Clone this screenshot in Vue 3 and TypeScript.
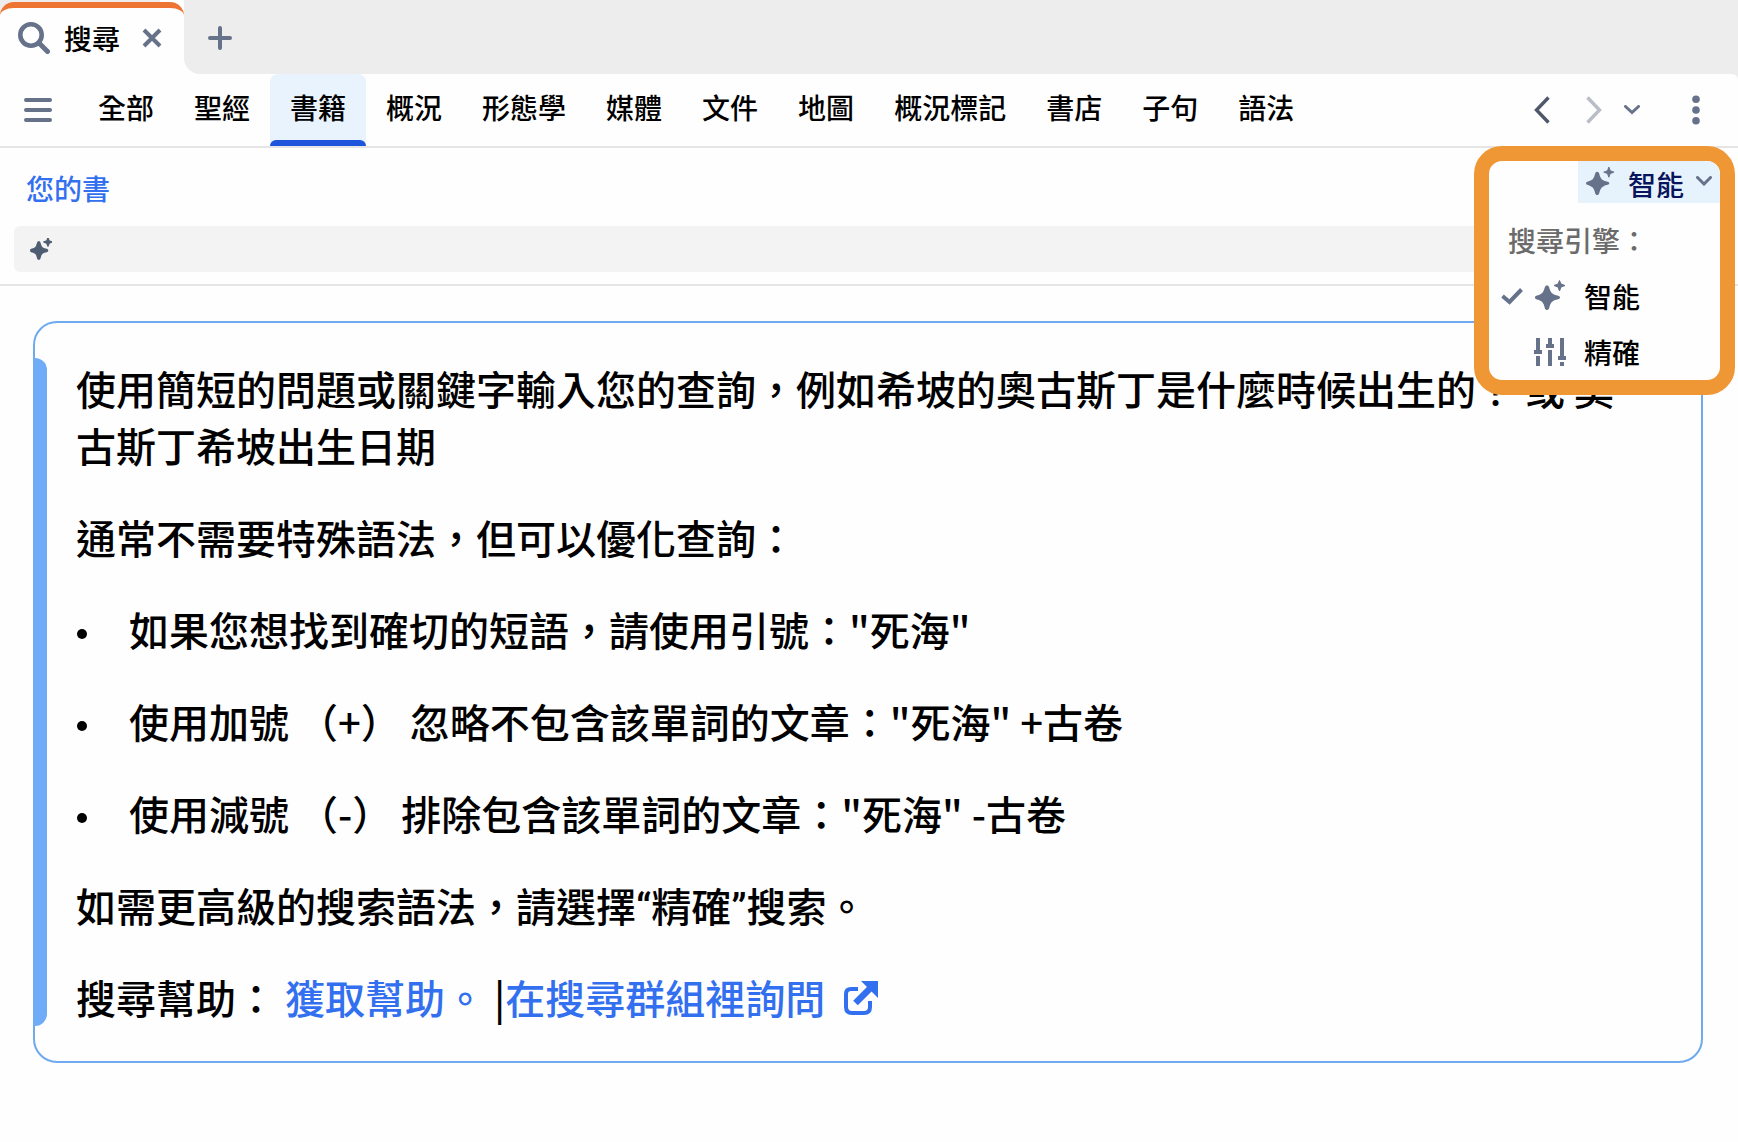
<script setup lang="ts">
import { ref } from 'vue'

const tabs: string[] = ['全部', '聖經', '書籍', '概況', '形態學', '媒體', '文件', '地圖', '概況標記', '書店', '子句', '語法']
const activeTab = ref('書籍')

const tips: string[] = [
  '如果您想找到確切的短語，請使用引號："死海"',
  '使用加號 （+） 忽略不包含該單詞的文章："死海" +古卷',
  '使用減號 （-） 排除包含該單詞的文章："死海" -古卷',
]

const engine = ref('智能')
const query = ref('')
</script>

<template>
  <div class="app">
    <header class="strip">
      <div class="doc-tab">
        <svg class="slate" width="32" height="32" viewBox="0 0 32 32" aria-hidden="true">
          <circle cx="13" cy="13" r="10.7" fill="none" stroke="currentColor" stroke-width="4.6" />
          <path d="M21 21 L29.5 29.5" stroke="currentColor" stroke-width="5" stroke-linecap="round" />
        </svg>
        <span class="doc-title">搜尋</span>
        <button class="icon-btn" type="button" aria-label="關閉">
          <svg width="20" height="20" viewBox="0 0 20 20"><path d="M2 2 L18 18 M18 2 L2 18" stroke="currentColor" stroke-width="4" /></svg>
        </button>
      </div>
      <div class="strip-rest">
        <button class="icon-btn" type="button" aria-label="新增分頁">
          <svg width="24" height="24" viewBox="0 0 24 24"><path d="M12 2 V22 M2 12 H22" stroke="currentColor" stroke-width="4" stroke-linecap="round" /></svg>
        </button>
      </div>
    </header>

    <div class="nav-back">
      <nav class="nav">
        <button class="icon-btn menu-btn" type="button" aria-label="選單">
          <svg width="28" height="24" viewBox="0 0 28 24"><path d="M2 2 H26 M2 12 H26 M2 22 H26" stroke="currentColor" stroke-width="4" stroke-linecap="round" /></svg>
        </button>
        <div class="tabs">
          <button
            v-for="tab in tabs"
            :key="tab"
            type="button"
            class="tab"
            :class="{ active: tab === activeTab }"
            @click="activeTab = tab"
          >{{ tab }}</button>
        </div>
        <div class="history">
          <button class="icon-btn dark" type="button" aria-label="上一頁">
            <svg width="16" height="28" viewBox="0 0 16 28"><path d="M14.5 1.5 L2.5 14 L14.5 26.5" fill="none" stroke="currentColor" stroke-width="3.4" /></svg>
          </button>
          <button class="icon-btn faint" type="button" aria-label="下一頁">
            <svg width="16" height="28" viewBox="0 0 16 28"><path d="M1.5 1.5 L13.5 14 L1.5 26.5" fill="none" stroke="currentColor" stroke-width="3.4" /></svg>
          </button>
          <button class="icon-btn recent" type="button" aria-label="歷史">
            <svg width="16" height="10" viewBox="0 0 16 10"><path d="M1.5 1.5 L8 7.5 L14.5 1.5" fill="none" stroke="currentColor" stroke-width="3" stroke-linecap="round" /></svg>
          </button>
          <button class="icon-btn more" type="button" aria-label="更多">
            <svg width="8" height="30" viewBox="0 0 8 30"><g fill="currentColor"><circle cx="4" cy="4.3" r="3.8" /><circle cx="4" cy="15" r="3.8" /><circle cx="4" cy="25.7" r="3.8" /></g></svg>
          </button>
        </div>
      </nav>
    </div>

    <section class="panel">
      <a class="scope" href="#books">您的書</a>
      <label class="search">
        <svg width="22" height="22" viewBox="0 0 30 30" aria-hidden="true">
          <path d="M12 4 C14.500 4 14.500 7 15.500 10 Q16.300 12.700 19 13.500 C22 14.500 25 14.500 25 17 C25 19.500 22 19.500 19 20.500 Q16.300 21.300 15.500 24 C14.500 27 14.500 30 12 30 C9.500 30 9.500 27 8.500 24 Q7.700 21.300 5 20.500 C2 19.500 0 19.500 0 17 C0 14.500 2 14.500 5 13.500 Q7.700 12.700 8.500 10 C9.500 7 9.500 4 12 4Z" fill="currentColor" />
          <path d="M24.500 0 L26 4 L30 5.500 L26 7 L24.500 11 L23 7 L19 5.500 L23 4Z" fill="currentColor" stroke="currentColor" stroke-width="2" stroke-linejoin="round" />
        </svg>
        <input v-model="query" type="text" aria-label="搜尋" />
      </label>

      <div class="engine">
        <button class="engine-btn" type="button" aria-haspopup="menu" aria-expanded="true">
          <svg class="slate" width="28" height="28" viewBox="0 0 30 30" aria-hidden="true">
            <path d="M12 5 C14.500 5 14 8 15.500 11 Q16.300 13.500 19 14.500 C22 16 25 15.500 25 17.500 C25 19.500 22 19 19 20.500 Q16.300 21.500 15.500 24 C14 27 14.500 30 12 30 C9.500 30 10 27 8.500 24 Q7.700 21.500 5 20.500 C2 19 0 19.500 0 17.500 C0 15.500 2 16 5 14.500 Q7.700 13.500 8.500 11 C10 8 9.500 5 12 5Z" fill="currentColor" />
            <path d="M24.500 0 L26 4 L30 5.500 L26 7 L24.500 11 L23 7 L19 5.500 L23 4Z" fill="currentColor" stroke="currentColor" stroke-linejoin="round" />
          </svg>
          <span class="engine-name">{{ engine }}</span>
          <svg class="slate" width="16" height="10" viewBox="0 0 16 10" aria-hidden="true"><path d="M1.500 1.500 L8 8 L14.500 1.500" fill="none" stroke="currentColor" stroke-width="3" stroke-linecap="round" /></svg>
        </button>
        <div class="engine-menu" role="menu">
          <div class="menu-title">搜尋引擎：</div>
          <button class="menu-item" type="button" role="menuitemradio" :aria-checked="engine === '智能'" @click="engine = '智能'">
            <span class="check"><svg v-if="engine === '智能'" width="22" height="18" viewBox="0 0 22 18"><path d="M1.500 9 L8.500 15 L20.500 2.500" fill="none" stroke="currentColor" stroke-width="4" /></svg></span>
            <svg class="glyph" width="32" height="32" viewBox="-1 0 32 32">
              <path d="M12 5.500 C14.500 5.500 14 8 15.500 11 Q16.300 13.500 19 14.500 C22 16 25 15.500 25 17.500 C25 19.500 22 19 19 20.500 Q16.300 21.500 15.500 24 C14 27 14.500 30 12 30 C9.500 30 10 27 8.500 24 Q7.700 21.500 5 20.500 C2 19 0 19.500 0 17.500 C0 15.500 2 16 5 14.500 Q7.700 13.500 8.500 11 C10 8 9.500 5.500 12 5.500Z" fill="currentColor" />
              <path d="M24.500 0.500 L26 4 L30 5.500 L26 7 L24.500 11 L23 7 L19 5.500 L23 4Z" fill="currentColor" stroke="currentColor" stroke-linejoin="round" />
            </svg>
            <span>智能</span>
          </button>
          <button class="menu-item" type="button" role="menuitemradio" :aria-checked="engine === '精確'" @click="engine = '精確'">
            <span class="check"><svg v-if="engine === '精確'" width="22" height="18" viewBox="0 0 22 18"><path d="M1.500 9 L8.500 15 L20.500 2.500" fill="none" stroke="currentColor" stroke-width="4" /></svg></span>
            <svg class="glyph" width="32" height="32" viewBox="0 0 32 32">
              <g stroke="currentColor" stroke-width="4" fill="none">
                <path d="M4 2 V18 M4 20 V30 M16 2 V10 M16 14 V30 M28 2 V22 M28 26 V30" />
                <path d="M0 16 H8 M12 10 H20 M24 22 H32" />
              </g>
            </svg>
            <span>精確</span>
          </button>
        </div>
      </div>
    </section>

    <main class="card">
      <div class="accent"></div>
      <div class="help">
        <p>使用簡短的問題或關鍵字輸入您的查詢，例如希坡的奧古斯丁是什麼時候出生的？ 或 奧古斯丁希坡出生日期</p>
        <p>通常不需要特殊語法，但可以優化查詢：</p>
        <ul>
          <li v-for="tip in tips" :key="tip"><span class="dot"></span>{{ tip }}</li>
        </ul>
        <p>如需更高級的搜索語法，請選擇<span class="quote">“</span>精確<span class="quote">”</span>搜索。</p>
        <p>
          搜尋幫助： <a href="#help">獲取幫助。</a> |<a href="#group">在搜尋群組裡詢問<svg class="external" width="36" height="36" viewBox="0 0 36 36" aria-hidden="true">
            <path d="M15 9 H8 Q3 9 3 14 V27 Q3 33 9 33 H21 Q27 33 27 27 V21" fill="none" stroke="currentColor" stroke-width="4" />
            <path d="M12.500 23 L28 7.500" stroke="currentColor" stroke-width="6.500" />
            <path d="M18 1 H35 V18Z" fill="currentColor" />
          </svg></a>
        </p>
      </div>
    </main>
  </div>
</template>

<style>
body {
  margin: 0;
  background: #fefefe;
}
</style>

<style scoped>
.app {
  font-family: "Noto Sans CJK TC", sans-serif;
  font-size: 28px;
  line-height: 40px;
  font-weight: 500;
  color: #000;
}
a {
  color: #3370f0;
  text-decoration: none;
}
button {
  font: inherit;
  color: inherit;
  background: none;
  border: 0;
  padding: 0;
  cursor: pointer;
}
svg {
  display: block;
  flex: none;
}
.slate,
.icon-btn,
.menu-item .check,
.glyph {
  color: #66728a;
}
.icon-btn {
  display: flex;
}

/* document tab strip */
.strip {
  display: flex;
  height: 74px;
  background: linear-gradient(to right, #ededed 0 160px, #fefefe 160px 200px, #ededed 200px);
}
.doc-tab {
  box-sizing: border-box;
  display: flex;
  align-items: center;
  width: 184px;
  margin-top: 2px;
  padding: 0 22px 6px 18px;
  border-top: 6px solid #ee7433;
  border-radius: 14px 14px 0 0;
  background: #fefefe;
}
.doc-title {
  margin: 0 auto 0 14px;
}
.strip-rest {
  flex: 1;
  display: flex;
  align-items: center;
  padding: 2px 24px 0;
  border-bottom-left-radius: 16px;
  background: #ededed;
}

/* category navigation */
.nav-back {
  background: #ededed;
}
.nav {
  display: flex;
  align-items: center;
  height: 72px;
  padding-right: 38px;
  border-top-right-radius: 6px;
  background: #fefefe;
}
.menu-btn {
  margin: 0 26px 0 24px;
}
.tabs {
  display: flex;
  align-self: stretch;
}
.tab {
  position: relative;
  padding: 0 20px 6px;
  white-space: nowrap;
}
.tab.active {
  background: #e8f3fd;
  border-radius: 8px 8px 0 0;
}
.tab.active::after {
  content: "";
  position: absolute;
  left: 0;
  right: 0;
  bottom: 0;
  height: 6px;
  border-radius: 6px 6px 0 0;
  background: #1f54dc;
}
.history {
  display: flex;
  align-items: center;
  margin-left: auto;
}
.dark {
  color: #4f586b;
}
.faint {
  margin-left: 36px;
  color: #b9bdc8;
}
.recent {
  margin-left: 22px;
}
.more {
  margin-left: 52px;
}

/* query panel */
.panel {
  position: relative;
  padding: 20px 14px 12px;
  border: solid #e5e5e5;
  border-width: 2px 0;
}
.scope {
  display: block;
  width: max-content;
  margin: 0 0 18px 12px;
}
.search {
  display: flex;
  align-items: center;
  height: 46px;
  padding-left: 16px;
  border-radius: 6px;
  background: #f3f3f3;
  color: #4f5d73;
}
.search input {
  flex: 1;
  min-width: 0;
  padding: 0 12px;
  border: 0;
  outline: 0;
  background: none;
  font: inherit;
}

/* engine picker with its highlighted frame */
.engine {
  position: absolute;
  z-index: 1;
  top: -2px;
  right: 3px;
  width: 231px;
  border: 15px solid #f09735;
  border-radius: 28px;
  background: #fefefe;
  overflow: hidden;
}
.engine-btn {
  display: flex;
  align-items: center;
  box-sizing: border-box;
  width: 142px;
  height: 42px;
  margin-left: auto;
  padding: 0 8px 2px;
  background: #e7f3fc;
  color: #08145c;
}
.engine-name {
  height: 34px;
  margin: 0 auto 0 14px;
  overflow: hidden;
}
.engine-menu {
  padding: 17px 12px 0;
}
.menu-title {
  padding: 0 7px 8px;
  color: #6b6b6b;
}
.menu-item {
  display: flex;
  align-items: center;
  width: 100%;
  height: 56px;
}
.menu-item .check {
  width: 22px;
  margin-right: 11px;
}
.glyph {
  margin-right: 18px;
}

/* help card */
.card {
  display: flex;
  margin: 35px 35px 78px 33px;
  padding: 35px 60px 35px 0;
  border: 2px solid #6fa9ee;
  border-radius: 24px;
}
.accent {
  flex: none;
  width: 14px;
  margin-left: -2px;
  border-radius: 0 12px 12px 0;
  background: #6eacf7;
}
.help {
  display: flex;
  flex-direction: column;
  gap: 35px;
  padding: 2px 0 0 29px;
  font-size: 40px;
  line-height: 57px;
}
p,
ul {
  margin: 0;
  padding: 0;
}
ul {
  display: flex;
  flex-direction: column;
  gap: 35px;
  list-style: none;
}
li {
  display: flex;
  align-items: center;
  white-space: pre-wrap;
}
.dot {
  width: 10px;
  height: 10px;
  margin: 8px 42px 0 1px;
  border-radius: 50%;
  background: #000;
}
.quote {
  font-family: Roboto, sans-serif;
  line-height: 40px;
}
.external {
  display: inline-block;
  margin-left: 18px;
  vertical-align: -2px;
}
</style>
